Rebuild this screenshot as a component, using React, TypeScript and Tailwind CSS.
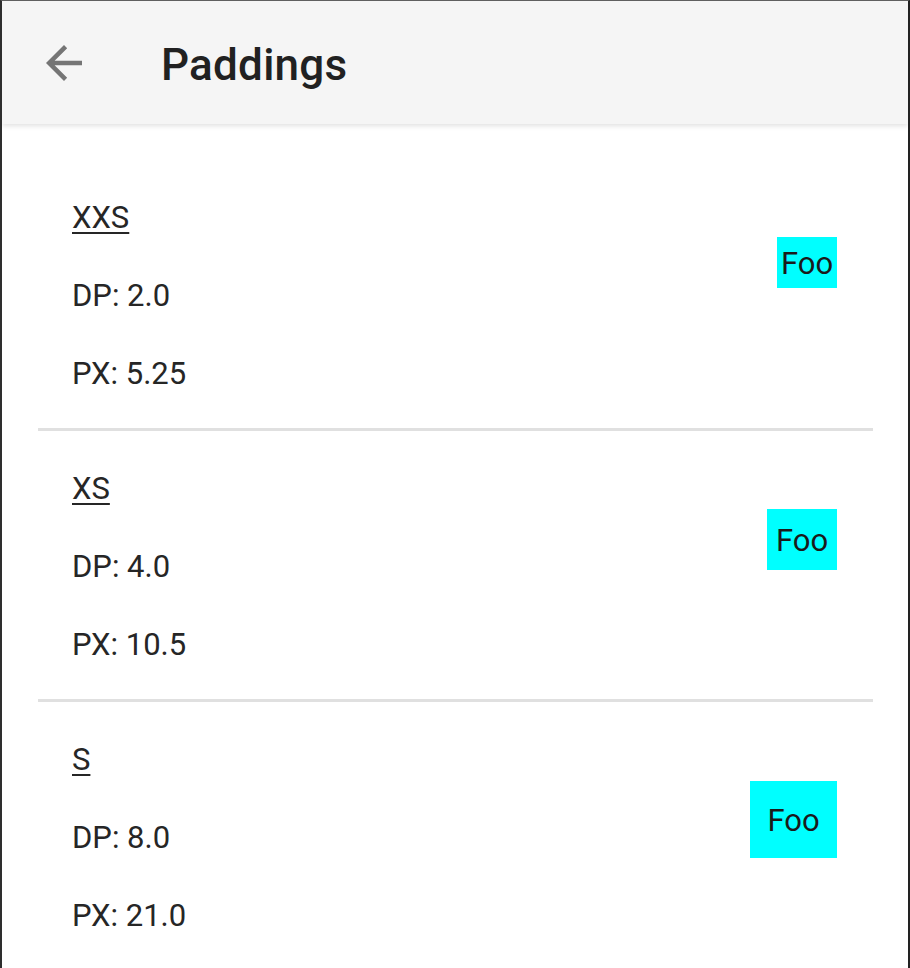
import React from "react";

const sizes = [
  { name: "XXS", dp: "2.0", px: "5.25", box: "w-[60px] h-[51px] mt-[58px]" },
  { name: "XS", dp: "4.0", px: "10.5", box: "w-[70px] h-[61px] mt-[59px]" },
  { name: "S", dp: "8.0", px: "21.0", box: "w-[87px] h-[77px] mt-[60px]" },
];

const BackArrow = () => (
  <svg width="54" height="54" viewBox="0 0 24 24" fill="#757575">
    <path d="M20 11H7.83l5.59-5.59L12 4l-8 8 8 8 1.41-1.41L7.83 13H20v-2z" />
  </svg>
);

const App = () => {
  return (
    <div
      className="w-[910px] h-[968px] overflow-hidden bg-white border-t border-t-[#606060] border-l-2 border-l-[#2e2e2e] border-r-2 border-r-[#222] flex flex-col"
      style={{ fontFamily: "Roboto, 'Liberation Sans', sans-serif" }}
    >
      {/* barra superior */}
      <div className="h-[123px] shrink-0 bg-[#f5f5f5] flex items-center shadow-[0_2px_5px_rgba(0,0,0,0.12)] relative z-10">
        <div className="ml-[35px] flex">
          <BackArrow />
        </div>
        <span className="ml-[70px] pt-[5px] text-[44px] font-medium text-[#212121] tracking-[0.25px]">
          Paddings
        </span>
      </div>

      {/* lista de tamaños */}
      <div className="pt-[36px] ml-[36px] mr-[35px] flex flex-col">
        {sizes.map((s, i) => (
          <div key={s.name}>
            {i > 0 && <div className="h-[3px] bg-[#e0e0e0]" />}
            <div className="pt-[19px] pb-[15px] pl-[34px] pr-[36px] flex items-start justify-between text-[31px] text-[#262626]">
              <div className="flex flex-col">
                <span className="h-[78px] leading-[78px] underline underline-offset-[4px] decoration-[2px]">
                  {s.name}
                </span>
                <span className="h-[78px] leading-[78px]">DP: {s.dp}</span>
                <span className="h-[78px] leading-[78px]">PX: {s.px}</span>
              </div>
              <div
                className={`${s.box} bg-[#00ffff] flex items-center justify-center pt-[3px] leading-[42px] text-[#1a1a1a]`}
              >
                Foo
              </div>
            </div>
          </div>
        ))}
      </div>
    </div>
  );
};

export default App;
